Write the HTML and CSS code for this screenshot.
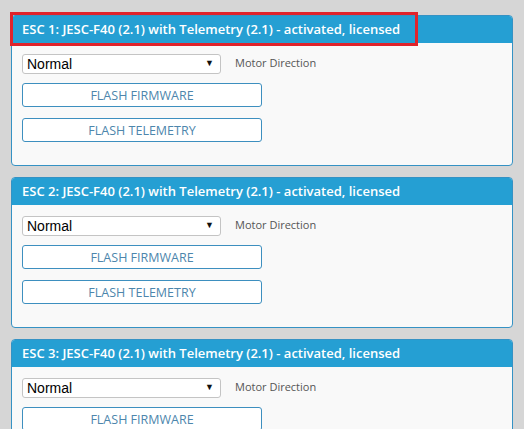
FILE: index.html
```html
<!DOCTYPE html>
<html lang="en">
<head>
  <meta charset="UTF-8">
  <title>ESC Settings</title>
  <link rel="stylesheet" href="styles.css">
</head>
<body>

  <!-- ESC 1 -->
  <div class="esc-card">
    <div class="esc-header">ESC 1: JESC-F40 (2.1) with Telemetry (2.1) - activated, licensed</div>
    <div class="esc-body">
      <div class="direction-row">
        <div class="select-wrap">
          <select class="direction-select">
            <option>Normal</option>
            <option>Reversed</option>
          </select>
        </div>
        <span class="direction-label">Motor Direction</span>
      </div>
      <button class="flash-btn">Flash Firmware</button>
      <button class="flash-btn">Flash Telemetry</button>
    </div>
    <div class="highlight-box"></div>
  </div>

  <!-- ESC 2 -->
  <div class="esc-card">
    <div class="esc-header">ESC 2: JESC-F40 (2.1) with Telemetry (2.1) - activated, licensed</div>
    <div class="esc-body">
      <div class="direction-row">
        <div class="select-wrap">
          <select class="direction-select">
            <option>Normal</option>
            <option>Reversed</option>
          </select>
        </div>
        <span class="direction-label">Motor Direction</span>
      </div>
      <button class="flash-btn">Flash Firmware</button>
      <button class="flash-btn">Flash Telemetry</button>
    </div>
  </div>

  <!-- ESC 3 -->
  <div class="esc-card">
    <div class="esc-header">ESC 3: JESC-F40 (2.1) with Telemetry (2.1) - activated, licensed</div>
    <div class="esc-body">
      <div class="direction-row">
        <div class="select-wrap">
          <select class="direction-select">
            <option>Normal</option>
            <option>Reversed</option>
          </select>
        </div>
        <span class="direction-label">Motor Direction</span>
      </div>
      <button class="flash-btn">Flash Firmware</button>
      <button class="flash-btn">Flash Telemetry</button>
    </div>
  </div>

</body>
</html>
```

FILE: styles.css
```css
body {
  margin: 0;
  padding: 15px 11px 0 11px;
  background-color: #d6d6d6;
  font-family: "Open Sans", sans-serif;
}

/* One box per ESC */
.esc-card {
  position: relative;
  background-color: #f9f9f9;
  border: 1px solid #3592c4;
  border-radius: 4px;
  margin-bottom: 11px;
}

.esc-header {
  background-color: #259fd3;
  color: #ffffff;
  font-size: 13px;
  font-weight: 600;
  height: 27px;
  line-height: 27px;
  padding-left: 10px;
  border-radius: 3px 3px 0 0;
}

.esc-body {
  display: flex;
  flex-direction: column;
  align-items: flex-start;
  gap: 11px;
  padding: 9px 10px 23px 10px;
}

.direction-row {
  display: flex;
  align-items: center;
  gap: 14px;
  height: 20px;
}

/* select with a plain black triangle instead of the browser arrow */
.select-wrap {
  position: relative;
  height: 20px;
}

.select-wrap::after {
  content: "\25BC";
  position: absolute;
  right: 7px;
  top: 4px;
  font-size: 9px;
  color: #111;
  pointer-events: none;
}

.direction-select {
  appearance: none;
  -webkit-appearance: none;
  width: 199px;
  height: 20px;
  font-family: "Liberation Sans", Arial, sans-serif;
  font-size: 14px;
  color: #000;
  background-color: #fff;
  border: 1px solid #c4c4c4;
  border-radius: 3px;
  padding: 0 4px;
}

.direction-label {
  font-size: 11px;
  color: #555;
}

.flash-btn {
  width: 240px;
  height: 24px;
  background-color: #fff;
  border: 1px solid #3d8fbf;
  border-radius: 3px;
  color: #4d86ac;
  font-family: "Open Sans", sans-serif;
  font-size: 12.5px;
  text-transform: uppercase;
  cursor: pointer;
}

/* Red annotation frame over the first header */
.highlight-box {
  position: absolute;
  left: -2px;
  top: -4px;
  width: 402px;
  height: 28px;
  border: 3px solid #e0232b;
}
```
